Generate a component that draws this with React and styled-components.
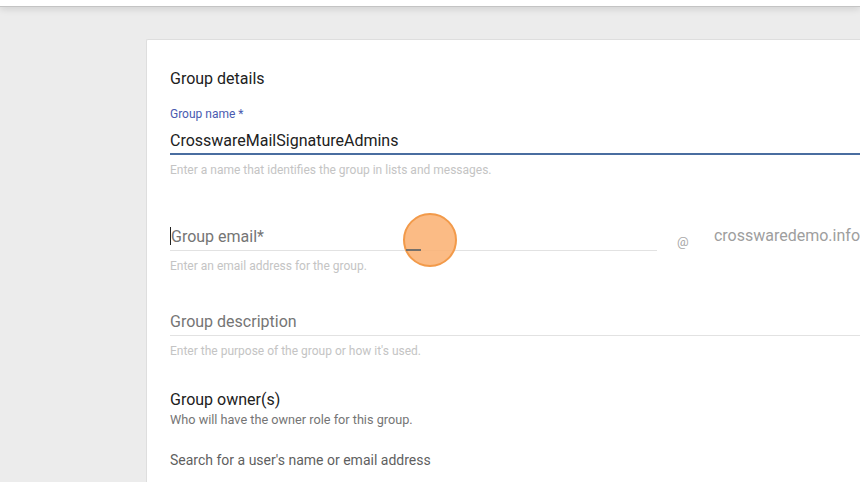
import styled, { createGlobalStyle } from "styled-components"

const GlobalStyle = createGlobalStyle`
    html, body {
        margin: 0;
        padding: 0;
        background: #ececec;
        font-family: Roboto, "Liberation Sans", sans-serif;
        overflow: hidden;
    }
`

export default function App() {
    return (
        <>
            <GlobalStyle />
            <TopBar />
            <Page>
                <Card>
                    <SectionTitle>Group details</SectionTitle>

                    <Field>
                        <FloatLabel>Group name *</FloatLabel>
                        <InputRow $focused>
                            <Value>CrosswareMailSignatureAdmins</Value>
                        </InputRow>
                        <Helper>Enter a name that identifies the group in lists and messages.</Helper>
                    </Field>

                    <Field $gap={47}>
                        <EmailRow>
                            <InputRow $width={487}>
                                <Caret />
                                <Placeholder>Group email*</Placeholder>
                            </InputRow>
                            <At>@</At>
                            <Domain>crosswaredemo.info</Domain>
                        </EmailRow>
                        <Helper>Enter an email address for the group.</Helper>
                        <ClickMark>
                            <MarkLine />
                        </ClickMark>
                    </Field>

                    <Field $gap={36}>
                        <InputRow>
                            <Placeholder>Group description</Placeholder>
                        </InputRow>
                        <Helper>Enter the purpose of the group or how it's used.</Helper>
                    </Field>

                    <Owners>
                        <OwnersTitle>Group owner(s)</OwnersTitle>
                        <OwnersHint>Who will have the owner role for this group.</OwnersHint>
                        <SearchText>Search for a user's name or email address</SearchText>
                    </Owners>
                </Card>
            </Page>
        </>
    )
}

const TopBar = styled.div`
    height: 6px;
    background: #fff;
    border-bottom: 1px solid #c4c4c4;
    box-shadow: 0 2px 7px rgba(0, 0, 0, 0.13);
    position: relative;
`

const Page = styled.div`
    padding: 32px 0 0 146px;
`

const Card = styled.div`
    background: #fff;
    border: 1px solid #dedede;
    border-right: none;
    border-bottom: none;
    border-radius: 2px 0 0 0;
    padding: 29px 0 0 23px;
    height: 450px;
    box-sizing: border-box;
    overflow: hidden;
`

const SectionTitle = styled.div`
    font-size: 16px;
    font-weight: 400;
    line-height: 20px;
    color: #212121;
    margin-bottom: 17px;
`

const Field = styled.div`
    position: relative;
    margin-top: ${({ $gap }) => ($gap ? `${$gap}px` : "0")};
`

const FloatLabel = styled.div`
    font-size: 12px;
    line-height: 16px;
    color: #4a5bb0;
    margin-bottom: 7px;
`

const InputRow = styled.div`
    display: flex;
    align-items: center;
    height: 22px;
    padding-bottom: ${({ $focused }) => ($focused ? "2px" : "3px")};
    border-bottom: ${({ $focused }) => ($focused ? "2px solid #4a6da0" : "1px solid #e2e2e2")};
    width: ${({ $width }) => ($width ? `${$width}px` : "auto")};
    flex: ${({ $width }) => ($width ? "none" : "1")};
`

const Value = styled.span`
    font-size: 16px;
    color: #212121;
`

const Placeholder = styled.span`
    font-size: 16px;
    color: #757575;
`

const Caret = styled.span`
    width: 1px;
    height: 18px;
    background: #222;
`

const Helper = styled.div`
    font-size: 12px;
    line-height: 16px;
    color: #c4c4c4;
    margin-top: 7px;
`

const EmailRow = styled.div`
    display: flex;
    align-items: flex-end;
`

const At = styled.span`
    font-size: 13px;
    color: #a8a8a8;
    margin-left: 20px;
    width: 38px;
    line-height: 18px;
`

const Domain = styled.span`
    font-size: 16px;
    color: #9e9e9e;
    line-height: 22px;
    padding-bottom: 4px;
    white-space: nowrap;
`

const ClickMark = styled.div`
    position: absolute;
    left: 233px;
    top: -12px;
    width: 50px;
    height: 50px;
    border-radius: 50%;
    background: rgba(251, 178, 116, 0.88);
    border: 2px solid #f29a4a;
`

const MarkLine = styled.div`
    position: absolute;
    left: 1px;
    top: 34px;
    width: 15px;
    height: 2px;
    background: #76706a;
`

const Owners = styled.div`
    margin-top: 30px;
`

const OwnersTitle = styled.div`
    font-size: 16px;
    line-height: 22px;
    color: #212121;
`

const OwnersHint = styled.div`
    font-size: 12.7px;
    line-height: 16px;
    color: #757575;
    margin-top: 1px;
`

const SearchText = styled.div`
    font-size: 14px;
    line-height: 20px;
    color: #5f5f5f;
    margin-top: 22px;
`
